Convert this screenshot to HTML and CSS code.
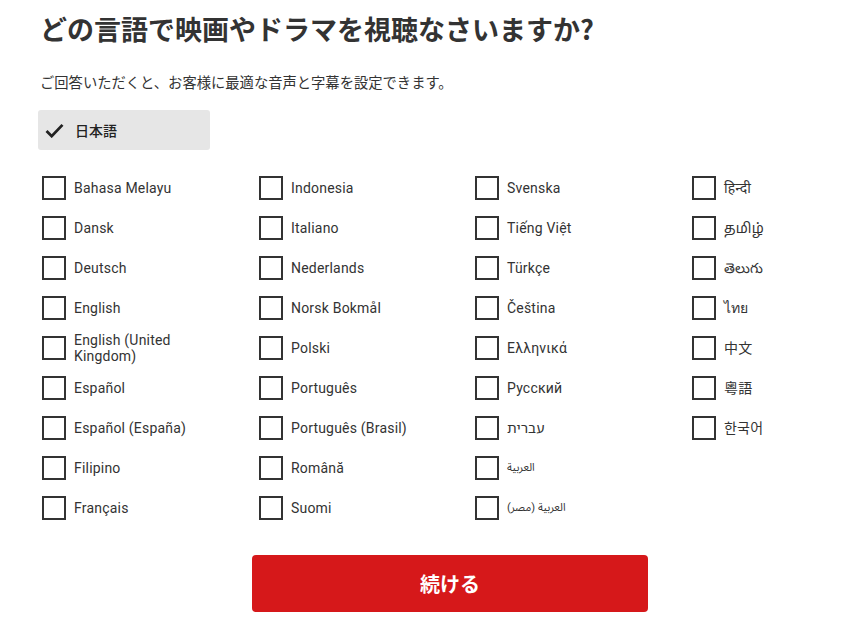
FILE: index.html
```html
<html>
<head>
    <title>言語の選択</title>
    <link rel="stylesheet" href="styles.css">
</head>
<body>

<div class="container">
    <h1>どの言語で映画やドラマを視聴なさいますか?</h1>
    <p class="subtitle">ご回答いただくと、お客様に最適な音声と字幕を設定できます。</p>

    <div class="selected">
        <svg class="check" viewBox="0 0 20 16" width="19" height="15">
            <path d="M1.5 8.5 L7 14 L18.5 2" fill="none" stroke="#222" stroke-width="3"/>
        </svg>
        <span>日本語</span>
    </div>

    <div class="languages">
        <div class="column">
            <label class="lang"><span class="box"></span><span class="name">Bahasa Melayu</span></label>
            <label class="lang"><span class="box"></span><span class="name">Dansk</span></label>
            <label class="lang"><span class="box"></span><span class="name">Deutsch</span></label>
            <label class="lang"><span class="box"></span><span class="name">English</span></label>
            <label class="lang"><span class="box"></span><span class="name">English (United Kingdom)</span></label>
            <label class="lang"><span class="box"></span><span class="name">Español</span></label>
            <label class="lang"><span class="box"></span><span class="name">Español (España)</span></label>
            <label class="lang"><span class="box"></span><span class="name">Filipino</span></label>
            <label class="lang"><span class="box"></span><span class="name">Français</span></label>
        </div>
        <div class="column">
            <label class="lang"><span class="box"></span><span class="name">Indonesia</span></label>
            <label class="lang"><span class="box"></span><span class="name">Italiano</span></label>
            <label class="lang"><span class="box"></span><span class="name">Nederlands</span></label>
            <label class="lang"><span class="box"></span><span class="name">Norsk Bokmål</span></label>
            <label class="lang"><span class="box"></span><span class="name">Polski</span></label>
            <label class="lang"><span class="box"></span><span class="name">Português</span></label>
            <label class="lang"><span class="box"></span><span class="name">Português (Brasil)</span></label>
            <label class="lang"><span class="box"></span><span class="name">Română</span></label>
            <label class="lang"><span class="box"></span><span class="name">Suomi</span></label>
        </div>
        <div class="column">
            <label class="lang"><span class="box"></span><span class="name">Svenska</span></label>
            <label class="lang"><span class="box"></span><span class="name">Tiếng Việt</span></label>
            <label class="lang"><span class="box"></span><span class="name">Türkçe</span></label>
            <label class="lang"><span class="box"></span><span class="name">Čeština</span></label>
            <label class="lang"><span class="box"></span><span class="name">Ελληνικά</span></label>
            <label class="lang"><span class="box"></span><span class="name">Русский</span></label>
            <label class="lang"><span class="box"></span><span class="name">עברית</span></label>
            <label class="lang"><span class="box"></span><span class="name small">العربية</span></label>
            <label class="lang"><span class="box"></span><span class="name small">العربية (مصر)</span></label>
        </div>
        <div class="column">
            <label class="lang"><span class="box"></span><span class="name">हिन्दी</span></label>
            <label class="lang"><span class="box"></span><span class="name">தமிழ்</span></label>
            <label class="lang"><span class="box"></span><span class="name">తెలుగు</span></label>
            <label class="lang"><span class="box"></span><span class="name">ไทย</span></label>
            <label class="lang"><span class="box"></span><span class="name">中文</span></label>
            <label class="lang"><span class="box"></span><span class="name">粵語</span></label>
            <label class="lang"><span class="box"></span><span class="name">한국어</span></label>
        </div>
    </div>

    <div class="actions">
        <button class="continue">続ける</button>
    </div>
</div>

</body>
</html>
```

FILE: styles.css
```css
body {
    margin: 0;
    background-color: #fff;
    color: #333;
    font-family: Roboto, "Noto Sans", "Noto Sans CJK JP", sans-serif;
    overflow: hidden;
}

.container {
    width: 812px;
    padding: 0 0 0 38px;
}

h1 {
    margin: 0;
    padding: 12px 0 0 2px;
    font-family: "Noto Sans CJK JP", sans-serif;
    font-size: 27px;
    font-weight: 700;
    line-height: 34px;
    color: #333;
}

.subtitle {
    margin: 0;
    padding: 26px 0 0 2px;
    font-family: "Noto Sans CJK JP", sans-serif;
    font-size: 14.3px;
    line-height: 20px;
    color: #333;
}

.selected {
    margin-top: 18px;
    width: 172px;
    height: 40px;
    background-color: #e6e6e6;
    border-radius: 3px;
    display: flex;
    align-items: center;
    box-sizing: border-box;
    padding-left: 7px;
}

.selected .check {
    margin-right: 11px;
}

.selected span {
    font-family: "Noto Sans CJK JP", sans-serif;
    font-size: 14px;
    font-weight: 500;
    color: #222;
}

.languages {
    display: grid;
    grid-template-columns: 217px 216px 217px 150px;
    margin-top: 26px;
    padding-left: 4px;
}

.column {
    display: flex;
    flex-direction: column;
    gap: 16px;
}

.lang {
    display: flex;
    align-items: center;
    height: 24px;
    gap: 8px;
    cursor: pointer;
}

.box {
    width: 24px;
    height: 24px;
    box-sizing: border-box;
    border: 2px solid #333;
    flex-shrink: 0;
}

.name {
    width: 140px;
    font-size: 14px;
    line-height: 16px;
    letter-spacing: 0.2px;
    color: #333;
    font-family: Roboto, "Noto Sans", "Noto Sans Hebrew", "Noto Sans Arabic", "Noto Sans Tamil", "DejaVu Sans", "Noto Sans CJK JP", "Noto Sans CJK KR", sans-serif;
}

.name.small {
    font-size: 11px;
    letter-spacing: 0;
}

.actions {
    display: flex;
    justify-content: center;
    margin-top: 35px;
    padding-left: 12px;
}

.continue {
    width: 396px;
    height: 57px;
    border: none;
    border-radius: 4px;
    background-color: #d6181a;
    color: #fff;
    font-family: "Noto Sans CJK JP", sans-serif;
    font-size: 20px;
    font-weight: 700;
    cursor: pointer;
}
```
